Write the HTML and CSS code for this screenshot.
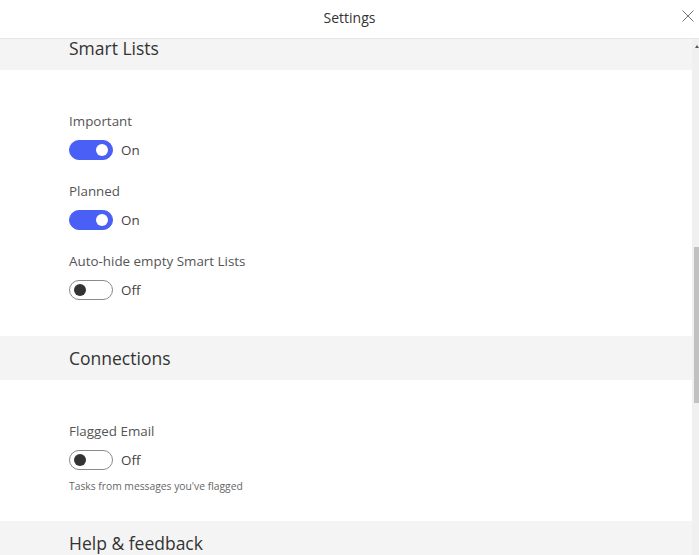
FILE: index.html
```html
<!DOCTYPE html>
<html>
<head>
<meta charset="utf-8">
<link rel="stylesheet" href="styles.css">
</head>
<body>
<div class="app">
  <header class="topbar">
    <span class="title">Settings</span>
    <button class="close" aria-label="Close">
      <svg width="12" height="12" viewBox="0 0 12 12"><path d="M0.5 0.5 L11.5 11.5 M11.5 0.5 L0.5 11.5" stroke="#777" stroke-width="1" fill="none"/></svg>
    </button>
  </header>
  <div class="main">
    <div class="viewport">
      <div class="list">
        <section>
          <h2 class="sec-head first">Smart Lists</h2>
          <div class="sec-body">
            <div class="item">
              <div class="label">Important</div>
              <div class="toggle-row"><span class="toggle on"><span class="knob"></span></span><span class="state">On</span></div>
            </div>
            <div class="item">
              <div class="label">Planned</div>
              <div class="toggle-row"><span class="toggle on"><span class="knob"></span></span><span class="state">On</span></div>
            </div>
            <div class="item">
              <div class="label">Auto-hide empty Smart Lists</div>
              <div class="toggle-row"><span class="toggle"><span class="knob"></span></span><span class="state">Off</span></div>
            </div>
          </div>
        </section>
        <section>
          <h2 class="sec-head">Connections</h2>
          <div class="sec-body conn">
            <div class="item">
              <div class="label">Flagged Email</div>
              <div class="toggle-row"><span class="toggle"><span class="knob"></span></span><span class="state">Off</span></div>
              <div class="desc">Tasks from messages you've flagged</div>
            </div>
          </div>
        </section>
        <section>
          <h2 class="sec-head">Help &amp; feedback</h2>
        </section>
      </div>
    </div>
    <div class="scrollbar">
      <span class="arrow"></span>
      <span class="thumb"></span>
    </div>
  </div>
</div>
</body>
</html>
```

FILE: styles.css
```css
* { box-sizing: border-box; }
html, body { margin: 0; padding: 0; }
body {
  width: 699px;
  height: 555px;
  overflow: hidden;
  background: #fff;
  font-family: "Open Sans", "Noto Sans", sans-serif;
  color: #333;
}
.app { display: flex; flex-direction: column; height: 555px; }
.topbar {
  position: relative;
  height: 39px;
  flex: none;
  border-bottom: 1px solid #e6e6e6;
  display: flex;
  align-items: center;
  justify-content: center;
}
.title { font-size: 14px; color: #333; margin-top: -3px; }
.close {
  position: absolute;
  right: 5px;
  top: 10px;
  width: 12px;
  height: 12px;
  padding: 0;
  border: 0;
  background: none;
  display: block;
}
.close svg { display: block; }
.main { flex: 1; display: flex; min-height: 0; }
.viewport { flex: 1; overflow: hidden; }
.sec-head {
  margin: 0;
  height: 44px;
  background: #f4f4f4;
  display: flex;
  align-items: center;
  padding-left: 69px;
  font-size: 17.5px;
  font-weight: 400;
  color: #333;
}
.sec-head.first {
  height: 31px;
  align-items: flex-start;
  line-height: 18px;
}
.sec-body { padding: 41px 0 36px 69px; display: flex; flex-direction: column; gap: 21px; }
.sec-body.conn { padding-bottom: 28px; }
.item { display: flex; flex-direction: column; gap: 9px; }
.label { font-size: 13.4px; line-height: 20px; color: #555; }
.toggle-row { display: flex; align-items: center; gap: 8px; height: 20px; }
.toggle {
  width: 44px;
  height: 20px;
  border-radius: 10px;
  border: 1px solid #8a8a8a;
  background: #fff;
  display: flex;
  align-items: center;
  padding: 0 4px;
}
.toggle .knob { width: 12px; height: 12px; border-radius: 50%; background: #333; }
.toggle.on { background: #4a5ff5; border-color: #4a5ff5; justify-content: flex-end; }
.toggle.on .knob { background: #fff; }
.state { font-size: 13.4px; color: #444; }
.desc { font-size: 10.3px; line-height: 14px; color: #666; }
.scrollbar {
  width: 7px;
  flex: none;
  background: #f0f0f0;
  position: relative;
}
.arrow {
  position: absolute;
  top: 6px;
  left: 3px;
  width: 0; height: 0;
  border-left: 2px solid transparent;
  border-right: 2px solid transparent;
  border-bottom: 3px solid #555;
}
.thumb {
  position: absolute;
  left: 2px;
  right: 0;
  top: 208px;
  height: 156px;
  background: #c1c1c1;
}
```
